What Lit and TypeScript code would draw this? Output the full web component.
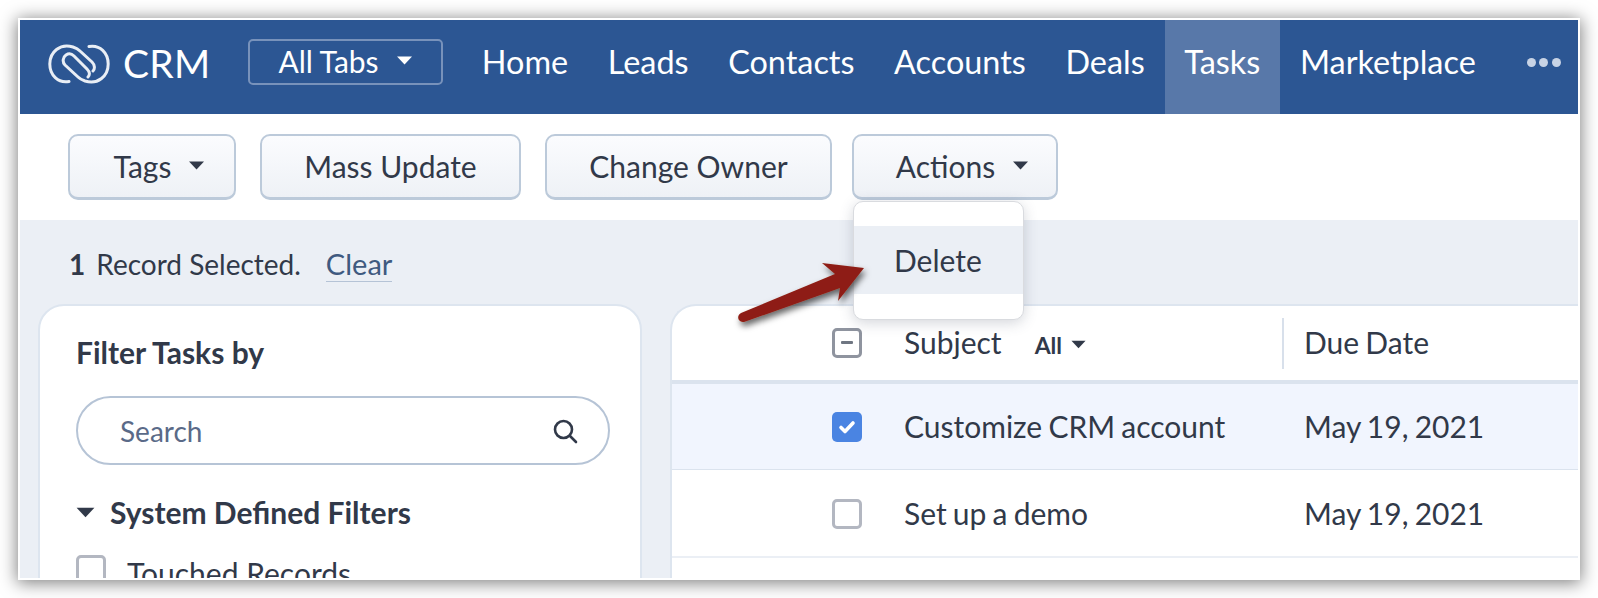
import { LitElement, html, css, svg } from "lit";
import { customElement } from "lit/decorators.js";

const caret = (w: number, h: number, cls = "") =>
  html`<svg class=${cls} width=${w} height=${h} viewBox="0 0 16 9"><path d="M0.5 0.5H15.5L8 8.5Z" fill="currentColor" /></svg>`;

@customElement("app-root")
export class AppRoot extends LitElement {
  static styles = css`
    :host { display: block; width: 1598px; height: 598px; box-sizing: border-box; padding: 18px; background: #fff; font-family: Lato, "Liberation Sans", sans-serif; color: #313949; }
    * { box-sizing: border-box; }
    .frame { position: relative; width: 1562px; height: 562px; border: 2px solid #fff; overflow: hidden; background: #fff; display: flex; flex-direction: column; }
    .shadow { box-shadow: 0 2px 16px 1px rgba(0,0,0,.5); width: 1562px; height: 562px; }
    .nav { flex: none; height: 94px; background: #2c5693; color: #fff; display: flex; align-items: stretch; padding-left: 28px; font-size: 32.4px; }
    .logo { align-self: center; margin-top: -7px; display: block; }
    .crm { align-self: center; margin: -8px 0 0 13px; font-size: 39px; width: 125px; letter-spacing: .2px; }
    .alltabs { align-self: center; margin-top: -11px; padding-bottom: 2px; width: 195px; height: 46px; border: 2px solid #7892bb; border-radius: 5px; display: flex; align-items: center; justify-content: center; gap: 17px; font-size: 30px; }
    .tabs { display: flex; margin-left: 19px; }
    .tab { display: flex; align-items: center; padding: 0 19.8px 12px; }
    .tab.active { background: #5878a9; }
    .dots { display: flex; gap: 3.5px; align-self: center; margin: -10px 0 0 31px; }
    .dots i { width: 9px; height: 9px; border-radius: 50%; background: #c8d3e5; }
    .toolbar { flex: none; height: 106px; display: flex; align-items: flex-start; gap: 24px; padding: 20px 0 0 48px; }
    .btn { height: 66px; padding-bottom: 2px; border: 2px solid #bccada; border-bottom-width: 3px; border-radius: 10px; background: linear-gradient(#fbfcfe, #eef1f6); display: flex; align-items: center; justify-content: center; font-size: 30px; color: #313949; gap: 17px; }
    .tags { width: 168px; padding-left: 15px; }
    .mass { width: 261px; }
    .owner { width: 287px; }
    .actions { width: 206px; margin-left: -4px; padding-left: 15px; }
    .body { flex: 1; background: #ebeff5; position: relative; min-height: 0; }
    .sel { height: 84px; padding: 27px 0 0 49px; font-size: 28px; display: flex; align-items: flex-start; }
    .sel b { font-weight: 700; margin-right: 11px; line-height: 34px; }
    .clear { margin-left: 25px; border-bottom: 1px solid #b5c3d6; color: #3f5a80; line-height: 34px; height: 35px; font-size: 29px; }
    .sel span.txt { line-height: 34px; }
    .cols { display: flex; align-items: flex-start; padding-left: 18px; }
    .panel { flex: none; width: 604px; height: 300px; background: #fff; border: 2px solid #dde5ef; border-radius: 26px 26px 0 0; padding: 28px 0 0 36px; }
    .panel h3 { margin: 0; font-size: 30px; line-height: 36px; font-weight: 700; }
    .search { margin-top: 26px; width: 534px; height: 69px; border: 2px solid #b6c4d6; border-radius: 35px; display: flex; align-items: center; justify-content: space-between; padding: 0 30px 0 42px; font-size: 28px; color: #5a6a88; }
    .sys { display: flex; align-items: center; margin-top: 29px; font-size: 30px; font-weight: 700; line-height: 36px; gap: 15px; }
    .cb { flex: none; width: 30px; height: 30px; border: 3px solid #b3b7c1; border-radius: 5px; background: #fff; display: flex; align-items: center; justify-content: center; }
    .touched { display: flex; gap: 21px; margin-top: 25px; font-size: 30px; line-height: 36px; }
    .table { margin-left: 28px; flex: 1; height: 300px; background: #fff; border-top: 2px solid #dde5ef; border-left: 2px solid #dde5ef; border-radius: 26px 0 0 0; font-size: 30px; word-spacing: -1.5px; }
    .row { display: flex; align-items: center; padding-left: 160px; }
    .row .subj { width: 380px; margin-left: 42px; display: flex; align-items: center; padding-bottom: 2px; }
    .due { margin-left: 20px; padding-bottom: 2px; }
    .head { height: 78px; border-bottom: 4px solid #dbe3ee; }
    .head .subj { height: 51px; border-right: 2px solid #d8e0eb; gap: 33px; }
    .all { font-size: 23px; display: flex; align-items: center; gap: 9px; font-weight: 700; margin-top: 5px; }
    .r1 { height: 86px; background: #f1f5fe; border-bottom: 1px solid #dbe3ee; }
    .r2 { height: 88px; padding-top: 2px; border-bottom: 2px solid #ebeff5; }
    .check { background: #4a84e2; border: none; }
    .minus { border-color: #8f949f; }
    .menu { position: absolute; left: 833px; top: -19px; width: 171px; height: 119px; background: #fff; border: 1px solid #d9dbdf; border-radius: 10px; box-shadow: 0 3px 14px rgba(60,70,90,.22); padding-top: 24px; }
    .menu div { height: 68px; background: #ebeff5; display: flex; align-items: center; padding-left: 40px; font-size: 30px; }
    .arrow { position: absolute; left: 710px; top: 30px; }
  `;

  render() {
    return html`<div class="shadow"><div class="frame">
      <div class="nav">
        <svg class="logo" width="62" height="40" viewBox="0 0 62 40" fill="none" stroke="#e9eef5" stroke-width="3" stroke-linecap="round">
          <path d="M41 2.5C52 0.5 60.2 9 60.2 20C60.2 32 50 41 37 37C34 36 32 35 30 33L17 21C14 18 15 13 18 11C21 9 24 10 26 12L39 25C42 28 42 31 40 33" />
          <path d="M21 37.5C10 39.5 1.8 31 1.8 20C1.8 8 12 -1 25 3C28 4 30 5 32 7L44 18C47 21 47 25 45 27" />
        </svg>
        <div class="crm">CRM</div>
        <div class="alltabs">All Tabs ${caret(17, 9)}</div>
        <div class="tabs">
          ${["Home", "Leads", "Contacts", "Accounts", "Deals"].map((t) => html`<div class="tab">${t}</div>`)}
          <div class="tab active">Tasks</div>
          <div class="tab">Marketplace</div>
        </div>
        <div class="dots"><i></i><i></i><i></i></div>
      </div>
      <div class="toolbar">
        <div class="btn tags">Tags ${caret(17, 9)}</div>
        <div class="btn mass">Mass Update</div>
        <div class="btn owner">Change Owner</div>
        <div class="btn actions">Actions ${caret(17, 9)}</div>
      </div>
      <div class="body">
        <div class="sel"><b>1</b><span class="txt">Record Selected.</span><span class="clear">Clear</span></div>
        <div class="cols">
          <div class="panel">
            <h3>Filter Tasks by</h3>
            <div class="search">Search
              <svg width="26" height="26" viewBox="0 0 26 26" fill="none" stroke="#313949" stroke-width="2.6" stroke-linecap="round"><circle cx="11.5" cy="11.5" r="8.5"/><path d="M18 18L24 24"/></svg>
            </div>
            <div class="sys">${caret(19, 11)}System Defined Filters</div>
            <div class="touched"><span class="cb"></span>Touched Records</div>
          </div>
          <div class="table">
            <div class="row head">
              <span class="cb minus"><svg width="12" height="4" viewBox="0 0 12 4"><rect width="12" height="3" rx="1" fill="#6f7682"/></svg></span>
              <div class="subj">Subject <span class="all">All ${caret(15, 9)}</span></div>
              <div class="due">Due Date</div>
            </div>
            <div class="row r1">
              <span class="cb check"><svg width="18" height="16" viewBox="0 0 18 16" fill="none" stroke="#fff" stroke-width="3.6" stroke-linecap="round" stroke-linejoin="round"><path d="M3 8.5L7 12.5L15 4"/></svg></span>
              <div class="subj">Customize CRM account</div><div class="due">May 19, 2021</div>
            </div>
            <div class="row r2">
              <span class="cb"></span>
              <div class="subj">Set up a demo</div><div class="due">May 19, 2021</div>
            </div>
          </div>
        </div>
        <div class="menu"><div>Delete</div></div>
        <svg class="arrow" width="170" height="90" viewBox="0 0 170 90" style="overflow:visible">
          <defs><filter id="s" x="-20%" y="-30%" width="150%" height="170%"><feDropShadow dx="2" dy="4" stdDeviation="3" flood-color="#000" flood-opacity=".6"/></filter></defs>
          ${svg`<path d="M134 18L92 13L105 24L11 63C6 66 8 73 14 72L110 38L108 51Z" fill="#8e1f13" filter="url(#s)"/>`}
        </svg>
      </div>
    </div></div>`;
  }
}
